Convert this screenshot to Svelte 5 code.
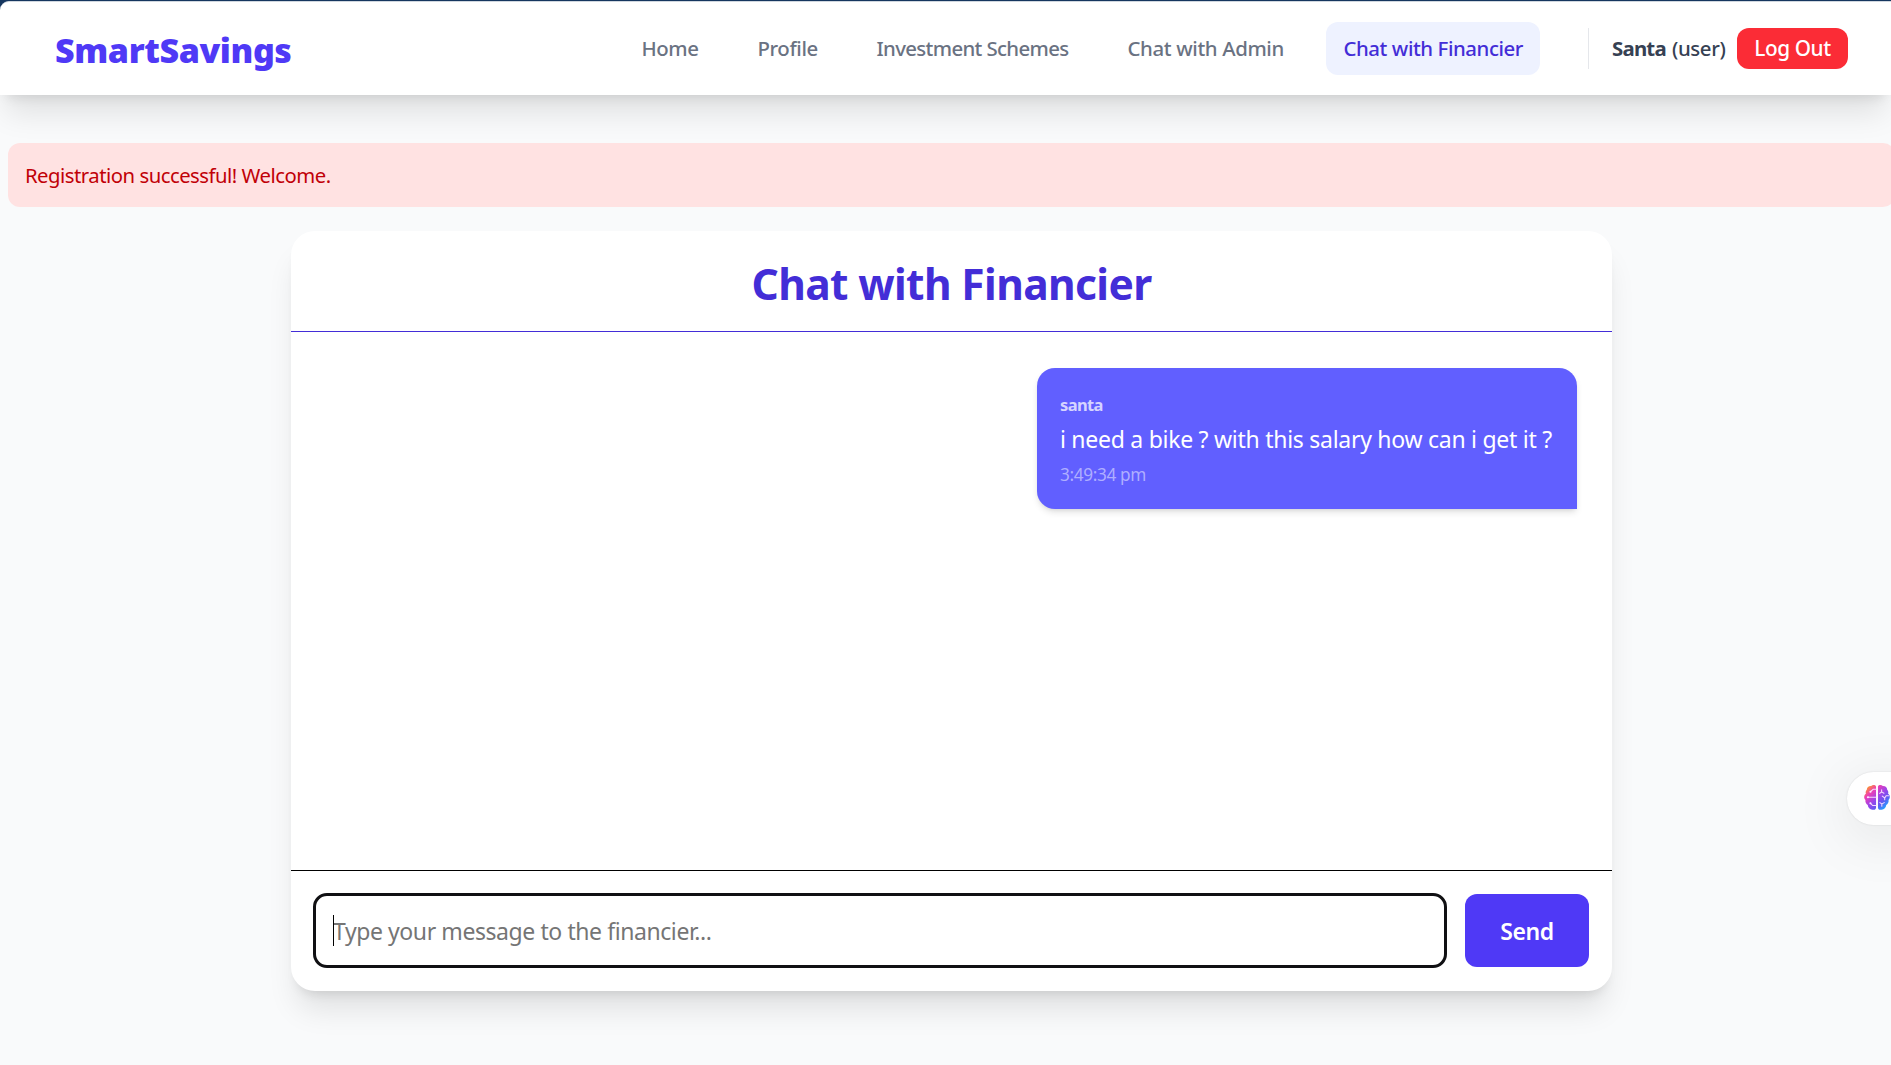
<script>
  const links = [
    { label: 'Home', name: 'home' },
    { label: 'Profile', name: 'profile' },
    { label: 'Investment Schemes', name: 'schemes' },
    { label: 'Chat with Admin', name: 'admin' },
    { label: 'Chat with Financier', name: 'financier', active: true }
  ];
  const messages = [
    { from: 'santa', text: 'i need a bike ? with this salary how can i get it ?', time: '3:49:34 pm' }
  ];
  let draft = $state('');
</script>

<div class="page">
  <header>
    <div class="logo">SmartSavings</div>
    <nav>
      {#each links as link}
        <a class={['link', link.name, link.active && 'active']}><span>{link.label}</span></a>
      {/each}
    </nav>
    <div class="account">
      <div class="who"><strong>Santa</strong><span>(user)</span></div>
      <button class="logout">Log Out</button>
    </div>
  </header>

  <div class="alert">Registration successful! Welcome.</div>

  <main>
    <h1>Chat with Financier</h1>
    <div class="log">
      {#each messages as m}
        <div class="bubble">
          <div class="from">{m.from}</div>
          <div class="text">{m.text}</div>
          <div class="time">{m.time}</div>
        </div>
      {/each}
    </div>
    <form>
      <div class="field">
        <input bind:value={draft} placeholder="Type your message to the financier..." />
        <i class="caret"></i>
      </div>
      <button type="button" class="send">Send</button>
    </form>
  </main>

  <div class="assistant">
    <svg viewBox="0 0 28 28" width="28" height="27">
      <defs>
        <linearGradient id="brain" x1="4" y1="2" x2="25" y2="25" gradientUnits="userSpaceOnUse">
          <stop offset="0" stop-color="#ff9f1c" />
          <stop offset="0.24" stop-color="#ee3fb4" />
          <stop offset="0.5" stop-color="#a044e8" />
          <stop offset="0.72" stop-color="#6657f2" />
          <stop offset="1" stop-color="#12b5ff" />
        </linearGradient>
      </defs>
      <g fill="url(#brain)">
        <path d="M13 2.5C12.3.8 9.5.5 8 2 5.500 1.800 3.400 3.500 3.400 6 2.200 7.200 2 8.700 2.500 10 .4 11.300.1 14.800 2 16.500 1.600 19 3 20.800 4.400 21.700 4.600 24.500 6.800 26.800 9.500 26.600 11.400 27.300 13 26.200 13 24.300Z" />
        <path d="M15 2.500C15.700.8 18.500.5 20 2 22.500 1.800 24.600 3.500 24.600 6 25.800 7.200 26 8.700 25.500 10 27.600 11.300 27.900 14.800 26 16.500 26.400 19 25 20.800 23.600 21.700 23.400 24.500 21.200 26.800 18.500 26.600 16.600 27.300 15 26.200 15 24.300Z" />
      </g>
      <g fill="none" stroke="#f6d9ff" stroke-width="1.100" stroke-linecap="round">
        <path d="M13 5.500H10L7.300 8M13 13.800H4.500M13 22.300H9.500L7.300 20" />
        <path d="M18.800 6V8.200L16.800 9.800M18.800 8.200L21.200 9.500M26 12.200H23.500L22 14.500L19.500 12.500M22 14.500V16.300M17 19.300L19 20.700L21.500 19.300M19 20.700V23" />
      </g>
      <g fill="#fbe6ff">
        <circle cx="7.200" cy="8" r="1.100" />
        <circle cx="4.600" cy="13.800" r="1.100" />
        <circle cx="7.200" cy="20" r="1.100" />
      </g>
    </svg>
  </div>
</div>

<style>
  :global(body) { background: #16365f; }
  .page {
    box-sizing: border-box;
    position: relative;
    height: 1065px;
    padding-top: 1px;
    overflow: hidden;
    font-family: "Noto Sans", "Open Sans", sans-serif;
    background: linear-gradient(#16365f 0 12px, #f9fafb 12px);
  }
  .page * { box-sizing: border-box; white-space: nowrap; }
  button { border: 0; padding: 0; font-family: inherit; color: #fff; }
  header {
    display: flex;
    align-items: flex-start;
    height: 94px;
    padding: 0 43px 0 55px;
    border-top: 1px solid #d0d7df;
    border-radius: 9px 0 0 0;
    background: #fff;
    box-shadow: 0 24px 30px -6px rgb(0 0 0 / .1), 0 9px 12px -7px rgb(0 0 0 / .1);
  }
  .logo {
    margin-top: 23px;
    line-height: 50px;
    font-size: 34px;
    font-weight: 900;
    letter-spacing: -.390px;
    color: #4f39f6;
  }
  nav { display: flex; gap: 24px; margin: 20px 0 0 auto; }
  .link {
    height: 53px;
    padding: 0 17.500px;
    border-radius: 12px;
    line-height: 53px;
    font-size: 20.400px;
    font-weight: 500;
    color: #6a7282;
  }
  .home { width: 92px; letter-spacing: -.450px; }
  .profile { width: 95px; letter-spacing: -.400px; }
  .schemes { width: 227px; letter-spacing: -.650px; }
  .admin { width: 192px; letter-spacing: -.370px; }
  .financier { width: 214px; letter-spacing: -.430px; }
  .active { background: #eef2ff; color: #432dd7; }
  .account {
    display: flex;
    height: 41px;
    margin: 26px 0 0 48px;
    padding-left: 23px;
    border-left: 1px solid #e5e7eb;
    line-height: 41px;
    font-size: 20.400px;
    font-weight: 500;
    color: #364153;
  }
  .who { display: flex; width: 125px; }
  .who strong { width: 60px; letter-spacing: -.780px; }
  .who span { letter-spacing: -.400px; }
  .logout {
    width: 111px;
    border-radius: 12px;
    background: #fb2c36;
    line-height: 41px;
    font-size: 20.800px;
    font-weight: 500;
    letter-spacing: -.400px;
  }
  .alert {
    width: 1887px;
    height: 64px;
    margin: 48px 0 0 8px;
    padding-left: 17px;
    border-radius: 12px;
    background: #ffe2e2;
    color: #c10007;
    line-height: 65px;
    font-size: 20.300px;
    letter-spacing: -.490px;
  }
  main {
    display: flex;
    flex-direction: column;
    width: 1321px;
    height: 760px;
    margin: 24px 0 0 291px;
    border-radius: 24px;
    background: #fff;
    box-shadow: 0 24px 30px -6px rgb(0 0 0 / .1), 0 9px 12px -7px rgb(0 0 0 / .12);
  }
  h1 {
    height: 101px;
    margin: 0;
    border-bottom: 1px solid #432dd7;
    text-align: center;
    line-height: 105px;
    font-size: 42.500px;
    font-weight: 700;
    letter-spacing: -.620px;
    color: #432dd7;
  }
  .log { flex: 1; display: flex; flex-direction: column; align-items: flex-end; padding: 36px 35px; }
  .bubble {
    width: 540px;
    height: 141px;
    padding: 23px 23px 0;
    border-radius: 18px 18px 0 18px;
    background: #615fff;
    color: #fff;
    box-shadow: 0 4px 7px -1px rgb(0 0 0 / .12), 0 2px 4px -2px rgb(0 0 0 / .1);
  }
  .from { line-height: 27px; font-size: 16.500px; font-weight: 700; letter-spacing: -.620px; color: #d5d4ff; }
  .text { line-height: 43px; font-size: 23px; letter-spacing: -.270px; }
  .time { line-height: 27px; font-size: 17.200px; letter-spacing: -.340px; color: #afaeff; }
  form {
    display: flex;
    gap: 18px;
    height: 121px;
    padding: 23px 23px 24px;
    border-top: 1px solid #000;
  }
  .field { position: relative; width: 1134px; height: 75px; margin: -1px 0 0 -1px; }
  input {
    width: 100%;
    height: 100%;
    padding: 1px 17px 0;
    border: 3px solid #101013;
    border-radius: 14px;
    outline: 0;
    background: #fff;
    font-family: inherit;
    font-size: 23px;
    letter-spacing: -.420px;
  }
  input::placeholder { color: #757575; opacity: 1; }
  .caret { position: absolute; left: 20px; top: 22px; width: 1px; height: 31px; background: #000; }
  .send {
    width: 124px;
    height: 73px;
    border-radius: 12px;
    background: #4f39f6;
    line-height: 74px;
    font-size: 23px;
    font-weight: 600;
    letter-spacing: -.400px;
  }
  .assistant {
    position: absolute;
    left: 1847px;
    top: 772px;
    width: 70px;
    height: 53px;
    padding: 12px 0 0 16px;
    border-radius: 27px 0 0 27px;
    background: #fff;
    box-shadow: 0 0 2px rgb(0 0 0 / .12), 0 10px 60px rgb(0 0 0 / .1);
  }
  .assistant svg { display: block; }
</style>
